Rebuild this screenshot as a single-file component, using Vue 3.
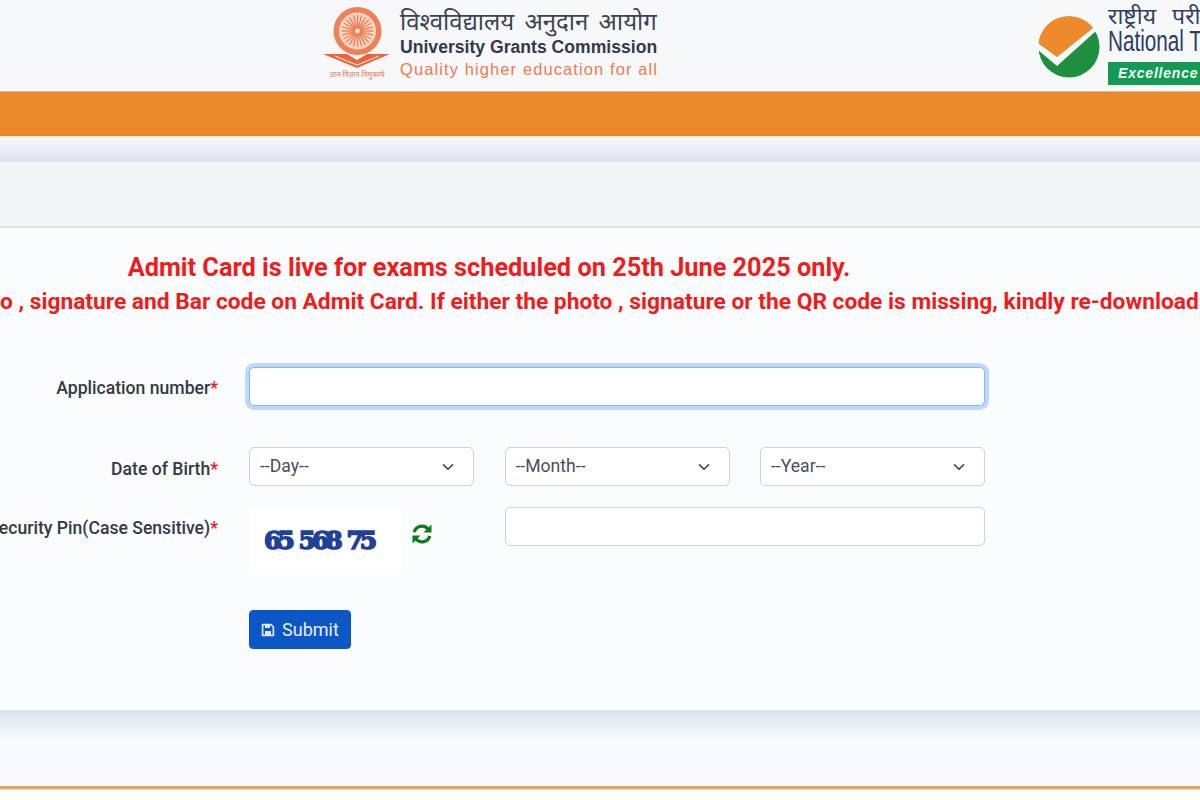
<script setup>
import { ref, onMounted } from 'vue'

const appNo = ref(null)
const dobFields = [
  { name: 'day', label: '--Day--' },
  { name: 'month', label: '--Month--' },
  { name: 'year', label: '--Year--' },
]
const spokes = Array.from({ length: 24 }, (_, i) => i * 15)

onMounted(() => appNo.value.focus())
</script>

<template>
  <div class="page">
    <header class="top">
      <div class="ugc">
        <div class="ugc-logo">
          <svg width="68" height="62" viewBox="0 0 68 62">
            <circle cx="34.5" cy="24" r="24" fill="#ee8158" />
            <circle cx="34.5" cy="24" r="18.5" fill="#fbd9c8" />
            <g stroke="#ef7f52" stroke-width="1.4">
              <line v-for="a in spokes" :key="a" x1="34.5" y1="8" x2="34.5" y2="20" :transform="`rotate(${a} 34.5 24)`" />
            </g>
            <circle cx="34.5" cy="24" r="5" fill="#ef7f52" />
            <circle cx="34.5" cy="24" r="2.4" fill="#fdeee6" />
            <path d="M0 47 L24 47 L34 53 L44 47 L67 47 L34 61 Z" fill="#e9653a" />
            <path d="M12 49 L34 58 L56 49" fill="none" stroke="#fbe0d3" stroke-width="1.2" />
          </svg>
          <span class="ugc-motto">ज्ञान-विज्ञान विमुक्तये</span>
        </div>
        <div class="ugc-text">
          <div class="ugc-hi">विश्वविद्यालय अनुदान आयोग</div>
          <div class="ugc-en">University Grants Commission</div>
          <div class="ugc-tag">Quality higher education for all</div>
        </div>
      </div>
      <div class="nta">
        <svg class="nta-logo" width="62" height="62" viewBox="0 0 62 62">
          <circle cx="31" cy="31" r="30.5" fill="#1d8f3f" />
          <path d="M0.6 27 A30.5 30.5 0 0 1 55 12 L19 41 Z" fill="#ee8a2c" />
          <path d="M0 27 L19 41 L55 12 L58 15 L19 50 L0 34 Z" fill="#f7f8fa" />
        </svg>
        <div class="nta-text">
          <div class="nta-hi">राष्ट्रीय परीक्षा एजेंसी</div>
          <div class="nta-en">National Testing Agency</div>
          <div class="nta-tag">Excellence in Assessment</div>
        </div>
      </div>
    </header>

    <div class="orange"></div>
    <div class="strip"></div>
    <div class="title-bar"></div>

    <main class="body">
      <p class="notice notice--big"><span>Admit Card is live for exams scheduled on 25th June 2025 only.</span></p>
      <p class="notice notice--small"><span>Please check your photo , signature and Bar code on Admit Card. If either the photo , signature or the QR code is missing, kindly re-download your Admit Card.</span></p>

      <form class="form" @submit.prevent>
        <div class="row row--app">
          <label class="lbl">Application number<i>*</i></label>
          <input ref="appNo" class="ctl ctl--wide" type="text" />
        </div>

        <div class="row row--dob">
          <label class="lbl">Date of Birth<i>*</i></label>
          <div class="dob">
            <select v-for="f in dobFields" :key="f.name" class="ctl sel">
              <option>{{ f.label }}</option>
            </select>
          </div>
        </div>

        <div class="row row--pin">
          <label class="lbl">Security Pin(Case Sensitive)<i>*</i></label>
          <div class="pin">
            <div class="captcha-wrap">
              <div class="captcha"><span>65 568 75</span></div>
              <svg class="refresh" width="22" height="22" viewBox="0 0 22 22">
                <path d="M3.2 9.2 A8 8 0 0 1 17 6" fill="none" stroke="#0d7a1a" stroke-width="3.2" />
                <path d="M20.5 1.5 V9.5 H12.5 Z" fill="#0d7a1a" />
                <path d="M18.8 12.8 A8 8 0 0 1 5 16" fill="none" stroke="#0d7a1a" stroke-width="3.2" />
                <path d="M1.5 20.5 V12.5 H9.5 Z" fill="#0d7a1a" />
              </svg>
            </div>
            <input class="ctl ctl--pin" type="text" />
          </div>
        </div>

        <div class="row row--btn">
          <button class="btn" type="submit">
            <svg width="14" height="14" viewBox="0 0 14 14">
              <path d="M1.6 1.6 H10 L12.4 4 V12.4 H1.6 Z" fill="none" stroke="#dce8fb" stroke-width="1.7" stroke-linejoin="round" />
              <rect x="4" y="2" width="5" height="3" fill="#dce8fb" />
              <rect x="4" y="8" width="6" height="4" fill="#dce8fb" />
            </svg>
            Submit
          </button>
        </div>
      </form>
    </main>

    <div class="shade"></div>
    <div class="footer-gap"></div>
    <div class="foot-line"></div>
  </div>
</template>

<style>
html, body { margin: 0; background: #fff; }
</style>

<style scoped>
.page {
  width: 1200px;
  height: 800px;
  overflow: hidden;
  font-family: Roboto, "Noto Sans", "Liberation Sans", sans-serif;
  color: #333a42;
}

.top {
  height: 91px;
  background: #f7f8fa;
  display: flex;
  overflow: hidden;
}
.ugc {
  display: flex;
  margin-left: 323px;
  padding-top: 7px;
  width: 715px;
  flex: none;
}
.ugc-logo { width: 68px; }
.ugc-logo svg { display: block; }
.ugc-motto {
  display: block;
  font-size: 7.5px;
  line-height: 10px;
  margin-top: 1px;
  color: #e87a50;
  white-space: nowrap;
  text-align: center;
}
.ugc-text { margin-left: 9px; white-space: nowrap; }
.ugc-hi {
  font-family: "Noto Sans", "DejaVu Sans", sans-serif;
  font-size: 24px;
  word-spacing: 4px;
  line-height: 30px;
  margin-top: -1px;
  color: #3d4450;
}
.ugc-en {
  font-family: "Liberation Sans", sans-serif;
  font-weight: 700;
  font-size: 17.6px;
  line-height: 20px;
  margin-top: 1px;
  color: #323a4a;
}
.ugc-tag {
  font-family: "Liberation Sans", sans-serif;
  font-size: 16.5px;
  letter-spacing: 1.1px;
  line-height: 24px;
  color: #ee7a50;
}

.nta { display: flex; flex: none; padding-top: 16px; }
.nta-logo { flex: none; display: block; }
.nta-text { margin-left: 8px; margin-top: -15px; white-space: nowrap; }
.nta-hi {
  font-family: "Noto Sans", "DejaVu Sans", sans-serif;
  font-size: 23px;
  word-spacing: 10px;
  line-height: 28px;
  color: #333f63;
}
.nta-en {
  font-family: "Liberation Sans", sans-serif;
  font-size: 30px;
  line-height: 28px;
  margin-top: -2px;
  transform: scaleX(.69);
  transform-origin: left;
  color: #2f3b60;
}
.nta-tag {
  margin-top: 7px;
  height: 23px;
  line-height: 23px;
  background: #149a55;
  color: #f3fbf6;
  font-family: "Liberation Sans", sans-serif;
  font-style: italic;
  font-weight: 700;
  font-size: 14px;
  letter-spacing: .8px;
  padding-left: 10px;
  width: 300px;
}

.orange {
  height: 45px;
  background: #ea8a2b;
  box-sizing: border-box;
  border-top: 1px solid #eeb77b;
  border-bottom: 1px solid #dd8436;
}
.strip {
  height: 26px;
  background: linear-gradient(#fdebd8 0, #f5f6fa 3px, #eef2f8 10px, #dde3ee 100%);
}
.title-bar {
  height: 66px;
  box-sizing: border-box;
  background: #f3f4f6;
  border-bottom: 2px solid #e0e1e4;
}

.body {
  height: 482px;
  box-sizing: border-box;
  background: #fbfcfe;
  padding-top: 25px;
}
.notice {
  margin: 0;
  display: flex;
  justify-content: center;
  width: 978px;
  color: #ee1c1c;
  font-weight: 700;
  white-space: nowrap;
}
.notice span { flex: none; }
.notice--big { font-size: 25.3px; line-height: 30px; }
.notice--small { font-size: 22.75px; line-height: 30px; margin-top: 4px; width: 1139px; }

.form { margin-top: 50px; }
.row { display: flex; }
.lbl {
  width: 218px;
  flex: none;
  margin-right: 31px;
  text-align: right;
  font-size: 17.6px;
  font-weight: 500;
  white-space: nowrap;
  display: flex;
  justify-content: flex-end;
}
.lbl i { color: #e8141c; font-style: normal; }

.ctl {
  box-sizing: border-box;
  height: 39px;
  background: #fff;
  border: 1px solid #ced4da;
  border-radius: 5px;
  font: 17.6px Roboto, sans-serif;
  color: #495057;
  outline: none;
  padding: 0 10px;
}
.ctl:focus {
  border-color: #86b7fe;
  box-shadow: 0 0 0 4px rgba(13, 110, 253, .25);
}
.ctl--wide { width: 736px; }

.row--app { height: 39px; }
.row--app .lbl { line-height: 43px; }
.row--dob { margin-top: 41px; height: 39px; }
.row--dob .lbl { line-height: 44px; }
.dob { display: flex; gap: 30.5px; }
.sel {
  width: 225px;
  padding-bottom: 2px;
  appearance: none;
  -webkit-appearance: none;
  background-image: url("data:image/svg+xml,%3csvg xmlns='http://www.w3.org/2000/svg' viewBox='0 0 16 16'%3e%3cpath fill='none' stroke='%23343a40' stroke-linecap='round' stroke-linejoin='round' stroke-width='2' d='m2 5 6 6 6-6'/%3e%3c/svg%3e");
  background-repeat: no-repeat;
  background-position: right 17px center;
  background-size: 16px 12px;
}

.row--pin { margin-top: 21px; height: 63px; }
.row--pin .lbl { line-height: 42px; }
.pin { display: flex; }
.captcha-wrap { display: flex; width: 256px; flex: none; }
.captcha {
  width: 152px;
  height: 63px;
  box-sizing: border-box;
  padding: 3px 0 0 15px;
  background: #fff;
  display: flex;
  align-items: center;
  flex: none;
}
.captcha span {
  font-family: "DejaVu Serif", serif;
  font-weight: 700;
  font-size: 25px;
  letter-spacing: -4px;
  word-spacing: 3px;
  color: #21409a;
  -webkit-text-stroke: 1.6px #21409a;
  white-space: nowrap;
}
.refresh { margin: 16px 0 0 10px; flex: none; }
.ctl--pin { width: 480px; }

.row--btn { margin-top: 40px; padding-left: 249px; }
.btn {
  height: 39px;
  width: 102px;
  box-sizing: border-box;
  background: #0d56c6;
  border: 1px solid #0d56c6;
  border-radius: 4px;
  color: #e6effc;
  font: 18px Roboto, sans-serif;
  display: flex;
  align-items: center;
  justify-content: center;
  gap: 7px;
  padding: 0;
}

.shade {
  height: 30px;
  background: linear-gradient(#dde3ee, #f9fafd);
}
.footer-gap { height: 46px; background: #f9fafd; }
.foot-line {
  height: 3px;
  background: #e9a05c;
  border-bottom: 1px solid #fbd9b5;
}
</style>
